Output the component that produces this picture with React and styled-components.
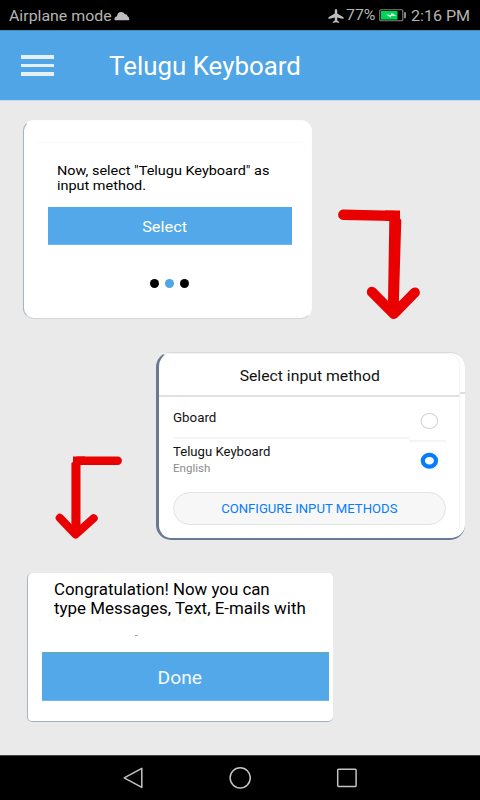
import React from 'react'
import styled, { createGlobalStyle } from "styled-components";

const GlobalStyle = createGlobalStyle`
    body {
        margin: 0px;
        background: #000;
    }

    * {
        box-sizing: border-box;
    }

    svg {
        display: block;
        flex-shrink: 0;
    }
`;

const Screen = styled.div`
    width: 480px;
    height: 800px;
    display: flex;
    flex-direction: column;
    overflow: hidden;
    background: #eaeaea;
    font-family: Roboto, "Liberation Sans", sans-serif;
`;

const Text = styled.span`
    display: block;
    width: fit-content;
    white-space: nowrap;
    color: ${props => props.$color || "#111"};
    font-size: ${props => props.$size}px;
    line-height: ${props => props.$line}px;
    transform: scaleX(${props => props.$stretch || 1});
    transform-origin: ${props => props.$center ? "center" : "left"};
`;

const StatusBar = styled.div`
    height: 30px;
    flex-shrink: 0;
    display: flex;
    justify-content: space-between;
    padding: 6px 9px 0px 9px;
    background: #000;
`;

const StatusSide = styled.div`
    width: ${props => props.$width}px;
    display: grid;
    grid-template-columns: ${props => props.$columns};
`;

const Header = styled.header`
    height: 70px;
    flex-shrink: 0;
    display: flex;
    align-items: flex-start;
    padding: 17px 0px 0px 21px;
    background: #4fa5e5;
    border-top: 1px solid #3f8fbb;

    span {
        margin: 1px 0px 0px 55px;
    }
`;

const MenuButton = styled.div`
    width: 33px;
    padding-top: 7px;
    display: flex;
    flex-direction: column;
    gap: 5px;

    i {
        height: 3.6px;
        background: #e4f0fa;
    }
`;

const Content = styled.main`
    flex: 1;
    padding-top: 19px;
    border-top: 1px solid #c3dcea;
`;

const Step = styled.section`
    display: flex;
    align-items: flex-start;
    height: ${props => props.$height}px;
    padding-left: ${props => props.$left}px;
    margin-bottom: ${props => props.$gap || 0}px;
`;

const SelectCard = styled.div`
    width: 289px;
    height: 199px;
    padding: 21px 0px 0px 8px;
    border-radius: 11px;
    background: #fff;
    border: 1px solid #fdfdfd;
    border-left-color: #a9b3bf;
    border-bottom-color: #d3d7db;
`;

const SelectBody = styled.div`
    padding: 20px 0px 0px 16px;
    width: 276px;
    height: 174px;
    border-top: 1px solid #fafafa;
    border-radius: 8px;
`;

const BlueButton = styled.div`
    width: ${props => props.$width}px;
    height: ${props => props.$height}px;
    display: flex;
    justify-content: center;
    padding-right: ${props => props.$shift || 0}px;
    background: #52a8e8;
    border-top: 1px solid ${props => props.$edge || "#52a8e8"};
    border-bottom: 1px solid #70b8ed;
`;

const Message = styled.div`
    padding-left: ${props => props.$left || 0}px;
    height: ${props => props.$height}px;
`;

const Dots = styled.div`
    display: flex;
    gap: 6px;
    margin: 34px 0px 0px 102px;
`;

const Dot = styled.i`
    width: 9px;
    height: 9px;
    border-radius: 50%;
    background: ${props => props.$active ? "#4fa5e5" : "#000"};
`;

const MethodCard = styled.div`
    width: 309px;
    height: 188px;
    border-radius: 15px;
    background: #fff;
    border-left: 3px solid #687a93;
    border-bottom: 2px solid #687a93;
    border-top: 1px solid #d8d9db;
`;

const TitleRow = styled.div`
    display: flex;
    align-items: flex-end;
`;

const MethodTitle = styled.div`
    height: 42px;
    width: 301px;
    display: flex;
    justify-content: center;
    padding: 12px 0px 0px 2px;
    border: solid #f5f5f5;
    border-width: 1px 1px 0px 0px;
    border-top-right-radius: 12px;
`;

const TitleEdge = styled.div`
    width: 5px;
    height: 2px;
    background: #dedede;
    margin-bottom: 1px;
`;

const MethodBody = styled.div`
    width: 301px;
    height: 143px;
    padding-left: 14px;
    border-top: 2px solid #e0e0e0;
    border-right: 1px solid #f4f4f4;
    border-bottom-right-radius: 12px;
`;

const Method = styled.div`
    display: flex;
    justify-content: space-between;
    width: 273px;
    height: ${props => props.$height}px;

    svg {
        margin: ${props => props.$radioTop}px 7px 0px 0px;
    }
`;

const MethodName = styled.div`
    padding-top: ${props => props.$top}px;
`;

const Divider = styled.div`
    display: flex;
    height: 4px;

    i {
        width: 236px;
        height: 1.5px;
        background: #f4f4f4;
    }

    i + i {
        width: 37px;
        margin-top: 3px;
    }
`;

const Configure = styled.div`
    width: 273px;
    height: 33px;
    display: flex;
    justify-content: center;
    padding-top: 7px;
    border: 1px solid #e2e3e5;
    border-radius: 17px;
    background: #f7f7f7;
`;

const DoneCard = styled.div`
    width: 306px;
    height: 149px;
    padding: 7px 0px 0px 14px;
    border-radius: 5px;
    background: #fff;
    border-left: 1px solid #a9b4c4;
    border-bottom: 1px solid #a3b0c0;
`;

const Specks = styled.svg`
    margin-left: 12px;
`;

const NavBar = styled.nav`
    height: 45px;
    flex-shrink: 0;
    background: #000;
    border-top: 1px solid #444;
    display: flex;
    justify-content: center;
    gap: 85px;
    padding-top: 10px;
`;

const StatusIcon = styled.svg`
    margin-top: ${props => props.$top}px;
`;

const Arrow = styled.svg`
    margin: ${props => props.$margin};
`;

const Cloud = () => (
    <StatusIcon $top={4.5} width="16" height="10" viewBox="0 0 16 10">
        <path fill="#bdbdbd" d="M1.2 9.2 Q.2 9 .5 7.4 Q.9 5.4 3 5.2 Q3.6 1 7 1 Q9.8 1 10.7 3 Q13 3 13.7 5.3 Q15.4 6 15.3 9.2Z" />
    </StatusIcon>
)

const Plane = () => (
    <StatusIcon $top={1.5} width="16" height="16" viewBox="0 0 16 16">
        <path fill="#bdbdbd" d="M6.8 2 Q8-.2 9.2 2 V5.6 L15.5 9.3 V11 L9.2 9.4 V12.5 L11.2 13.9 V15 L8 14.3 L4.8 15 V13.9 L6.8 12.5 V9.4 L.5 11 V9.3 L6.8 5.6Z" />
    </StatusIcon>
)

const Battery = () => (
    <StatusIcon $top={3} width="28" height="13" viewBox="0 0 28 13">
        <rect x=".8" y=".8" width="23" height="11" rx="1" fill="#000" stroke="#858585" strokeWidth="1.1" />
        <rect x="2" y="2" width="16.5" height="8.6" fill="#00d455" />
        <rect x="25.2" y="3.2" width="1.6" height="6" fill="#aaa" />
        <path d="M7 5.6 L12 5.9 L12.5 4 L17.5 6.8 L12.3 6.8 L11.7 8.6Z" fill="#e8fff0" />
    </StatusIcon>
)

const ArrowRight = () => (
    <Arrow $margin="85px 0px 0px 23px" width="90" height="116" viewBox="335 205 90 116">
        <g fill="none" stroke="#e90000" strokeLinejoin="round" strokeLinecap="round">
            <path d="M343.3 214.7 L394 215.9" strokeWidth="10.4" />
            <path d="M371.9 291.9 L393.8 314 L414.8 292.5" strokeWidth="10.2" />
        </g>
        <path d="M400 210.6 V218.5 L401.3 220 L398.9 301 L402 303 L394 317 L385 303 L388 301 L389.3 221 H385 V210.5Z" fill="#e90000" />
    </Arrow>
)

const ArrowLeft = () => (
    <Arrow $margin="102px 32px 0px 0px" width="70" height="87" viewBox="54 454 70 87">
        <g fill="none" stroke="#e90000" strokeLinejoin="round" strokeLinecap="round">
            <path d="M78 460.8 H117.7" strokeWidth="8.4" />
            <path d="M59.8 517.9 L75.6 534.4 L93.6 518.3" strokeWidth="8.2" />
        </g>
        <path d="M73 456.6 H85 V465 H80.5 V527 L76 536 L71.4 527 V463 L73 462Z" fill="#e90000" />
    </Arrow>
)

const Radio = ({ checked }) => (
    <svg width="19" height="18" viewBox="0 0 19 18">
        {checked
            ? <ellipse cx="9.4" cy="8.7" rx="6.6" ry="5.9" fill="#fff" stroke="#087cff" strokeWidth="4.2" />
            : <ellipse cx="9.4" cy="9" rx="8.3" ry="7.5" fill="#fff" stroke="#d3d3d3" strokeWidth="1.1" />}
    </svg>
)

function App() {
    return (
        <Screen>
            <GlobalStyle />
            <StatusBar>
                <StatusSide $width={122} $columns="105px 16px">
                    <Text $size={15} $line={20} $stretch={1.06} $color="#b5b5b5">Airplane mode</Text>
                    <Cloud />
                </StatusSide>
                <StatusSide $width={143} $columns="17.5px 33px 32.5px 60px">
                    <Plane />
                    <Text $size={15} $line={19} $stretch={1.06} $color="#b5b5b5">77%</Text>
                    <Battery />
                    <Text $size={15} $line={20} $stretch={1.07} $color="#b5b5b5">2:16 PM</Text>
                </StatusSide>
            </StatusBar>

            <Header>
                <MenuButton><i /><i /><i /></MenuButton>
                <Text $size={25} $line={36} $stretch={1.035} $color="#fff">Telugu Keyboard</Text>
            </Header>

            <Content>
                <Step $height={199} $left={23} $gap={33}>
                    <SelectCard>
                        <SelectBody>
                            <Message $left={9} $height={43.5}>
                                <Text $size={13.5} $line={15} $stretch={1.07} $color="#000">Now, select "Telugu Keyboard" as</Text>
                                <Text $size={13.5} $line={15} $stretch={1.07} $color="#000">input method.</Text>
                            </Message>
                            <BlueButton $width={243.5} $height={38} $shift={11}>
                                <Text $center $size={15} $line={38} $stretch={1.09} $color="#fff">Select</Text>
                            </BlueButton>
                            <Dots>
                                <Dot />
                                <Dot $active />
                                <Dot />
                            </Dots>
                        </SelectBody>
                    </SelectCard>
                    <ArrowRight />
                </Step>

                <Step $height={189} $left={54} $gap={32}>
                    <ArrowLeft />
                    <MethodCard>
                        <TitleRow>
                            <MethodTitle>
                                <Text $center $size={15} $line={20} $stretch={1.05}>Select input method</Text>
                            </MethodTitle>
                            <TitleEdge />
                        </TitleRow>
                        <MethodBody>
                            <Method $height={40} $radioTop={15}>
                                <MethodName $top={12}>
                                    <Text $size={13} $line={18} $stretch={1.025}>Gboard</Text>
                                </MethodName>
                                <Radio />
                            </Method>
                            <Divider><i /><i /></Divider>
                            <Method $height={51} $radioTop={11}>
                                <MethodName $top={2}>
                                    <Text $size={13} $line={18} $stretch={1.01}>Telugu Keyboard</Text>
                                    <Text $size={11} $line={16} $stretch={1.05} $color="#8c8c8c">English</Text>
                                </MethodName>
                                <Radio checked />
                            </Method>
                            <Configure>
                                <Text $center $size={13} $line={18} $stretch={1.01} $color="#087cff">CONFIGURE INPUT METHODS</Text>
                            </Configure>
                        </MethodBody>
                    </MethodCard>
                </Step>

                <Step $height={149} $left={27}>
                    <DoneCard>
                        <Message $left={12} $height={38}>
                            <Text $size={16} $line={19} $stretch={1.053} $color="#000">Congratulation! Now you can</Text>
                            <Text $size={16} $line={19} $stretch={1.057} $color="#000">type Messages, Text, E-mails with</Text>
                        </Message>
                        <Specks width="140" height="34" viewBox="0 0 140 34">
                            <path d="M1 2h2M45 2h2M90 2h2M129 2h2" stroke="#e8e8e8" strokeWidth="1.2" />
                            <path d="M81 17.5h3" stroke="#aaa" strokeWidth="1" />
                        </Specks>
                        <BlueButton $width={287} $height={49} $edge="#62ae9f" $shift={12}>
                            <Text $center $size={18} $line={49} $stretch={1.07} $color="#f2f9fe">Done</Text>
                        </BlueButton>
                    </DoneCard>
                </Step>
            </Content>

            <NavBar>
                <svg width="22" height="24" viewBox="0 0 22 24">
                    <path d="M2.2 11.8 L19.8 2.4 V21.4Z" fill="none" stroke="#c4c4c4" strokeWidth="1.5" strokeLinejoin="round" />
                </svg>
                <svg width="22" height="24" viewBox="0 0 22 24">
                    <circle cx="11.2" cy="11.8" r="10.1" fill="none" stroke="#c4c4c4" strokeWidth="1.5" />
                </svg>
                <svg width="22" height="24" viewBox="0 0 22 24">
                    <rect x="1.7" y="3.2" width="18.4" height="17.2" rx=".8" fill="none" stroke="#c4c4c4" strokeWidth="1.5" />
                </svg>
            </NavBar>
        </Screen>
    )
}

export default App;
